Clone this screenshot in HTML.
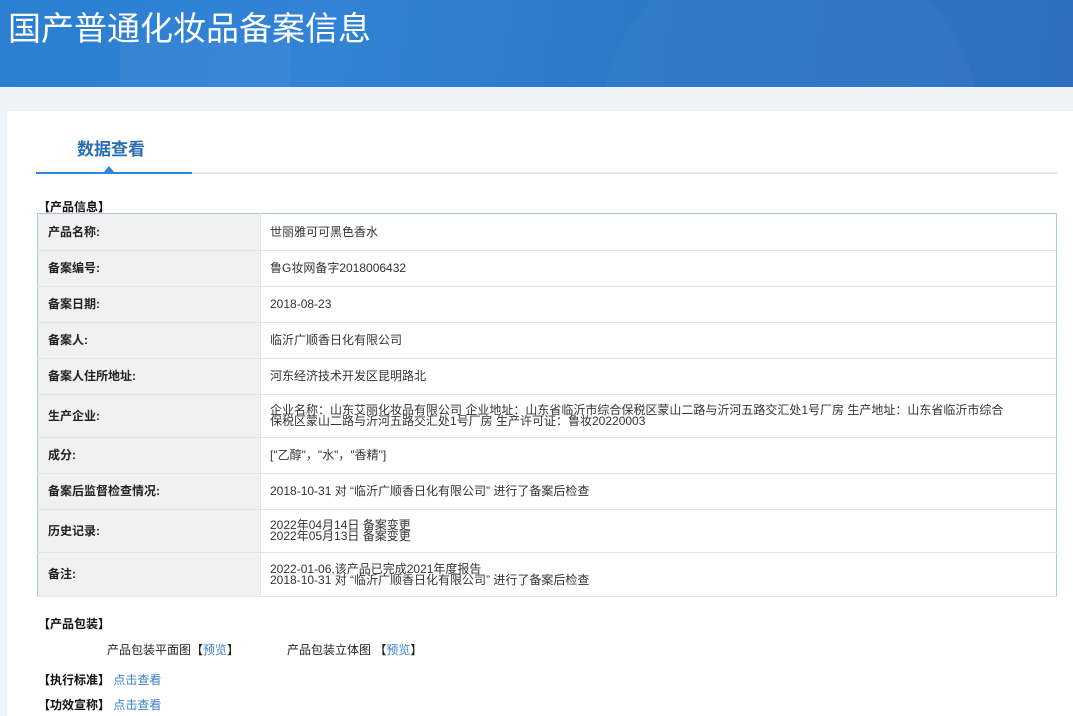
<!DOCTYPE html>
<html><head><meta charset="utf-8"><style>
*{margin:0;padding:0;box-sizing:border-box}
body{width:1073px;height:716px;overflow:hidden;background:#eff3f6;font-family:"Liberation Sans","Noto Sans CJK SC",sans-serif;font-size:12px;color:#333}
.hd{height:87px;background:linear-gradient(100deg,#2a7fd0 0%,#3283d6 30%,#2d78c8 60%,#2e6fc0 100%);position:relative;overflow:hidden}
.hd h1{position:absolute;left:8px;top:2px;color:#fff;font-weight:normal;font-size:33px;letter-spacing:0px;font-family:"Noto Sans CJK SC",sans-serif}
.c1{position:absolute;left:120px;top:40px;width:170px;height:80px;background:rgba(255,255,255,.04)}
.c2{position:absolute;left:600px;top:-60px;width:380px;height:380px;border-radius:50%;background:rgba(255,255,255,.025)}
.panel{position:absolute;left:7px;top:111px;width:1066px;height:605px;background:#fff}
.tab{position:absolute;left:70px;top:24px;font-size:17px;font-weight:bold;color:#2a6cb3}
.line{position:absolute;left:29px;top:61px;width:1021px;height:2px;background:#e6e6e6}
.line i{position:absolute;left:0;top:0;width:156px;height:2px;background:#2e86d4}
.tri{position:absolute;left:97px;top:55px;width:0;height:0;border-left:5px solid transparent;border-right:5px solid transparent;border-bottom:6px solid #2e86d4}
.sec{position:absolute;left:31px;font-weight:bold;font-size:12px;color:#111}
table{position:absolute;left:30px;top:102px;width:1020px;border-collapse:collapse;border:1px solid #a8c4ea}
td{border-bottom:1px solid #e4e4e4;vertical-align:middle;line-height:11px}
td.l{width:223px;background:#f1f1f1;font-weight:bold;font-size:12px;color:#222;padding-left:10px;border-right:1px solid #e4e4e4}
td.v{padding-left:9px;font-size:12px;color:#333}
a{color:#3a7fc8;text-decoration:none}
.p{position:absolute;font-size:12px;color:#222}
</style></head><body>
<div class="hd"><div class="c1"></div><div class="c2"></div><h1>国产普通化妆品备案信息</h1></div>
<div class="panel">
<div class="tab">数据查看</div>
<div class="line"><i></i></div><div class="tri"></div>
<div class="sec" style="top:87px">【产品信息】</div>
<table>
<tr style="height:37px"><td class="l">产品名称:</td><td class="v">世丽雅可可黑色香水</td></tr>
<tr style="height:36px"><td class="l">备案编号:</td><td class="v">鲁G妆网备字2018006432</td></tr>
<tr style="height:36px"><td class="l">备案日期:</td><td class="v">2018-08-23</td></tr>
<tr style="height:36px"><td class="l">备案人:</td><td class="v">临沂广顺香日化有限公司</td></tr>
<tr style="height:36px"><td class="l">备案人住所地址:</td><td class="v">河东经济技术开发区昆明路北</td></tr>
<tr style="height:43px"><td class="l">生产企业:</td><td class="v">企业名称：山东艾丽化妆品有限公司 企业地址：山东省临沂市综合保税区蒙山二路与沂河五路交汇处1号厂房 生产地址：山东省临沂市综合<br>保税区蒙山二路与沂河五路交汇处1号厂房 生产许可证：鲁妆20220003</td></tr>
<tr style="height:36px"><td class="l">成分:</td><td class="v">["乙醇"，"水"，"香精"]</td></tr>
<tr style="height:36px"><td class="l">备案后监督检查情况:</td><td class="v">2018-10-31 对 “临沂广顺香日化有限公司” 进行了备案后检查</td></tr>
<tr style="height:43px"><td class="l">历史记录:</td><td class="v">2022年04月14日 备案变更<br>2022年05月13日 备案变更</td></tr>
<tr style="height:44px"><td class="l">备注:</td><td class="v">2022-01-06,该产品已完成2021年度报告<br>2018-10-31 对 “临沂广顺香日化有限公司” 进行了备案后检查</td></tr>
</table>
<div class="sec" style="top:504px">【产品包装】</div>
<div class="p" style="left:100px;top:530px">产品包装平面图【<a>预览</a>】</div>
<div class="p" style="left:280px;top:530px">产品包装立体图 【<a>预览</a>】</div>
<div class="sec" style="top:560px">【执行标准】 <a style="font-weight:normal">点击查看</a></div>
<div class="sec" style="top:585px">【功效宣称】 <a style="font-weight:normal">点击查看</a></div>
</div>
</body></html>
